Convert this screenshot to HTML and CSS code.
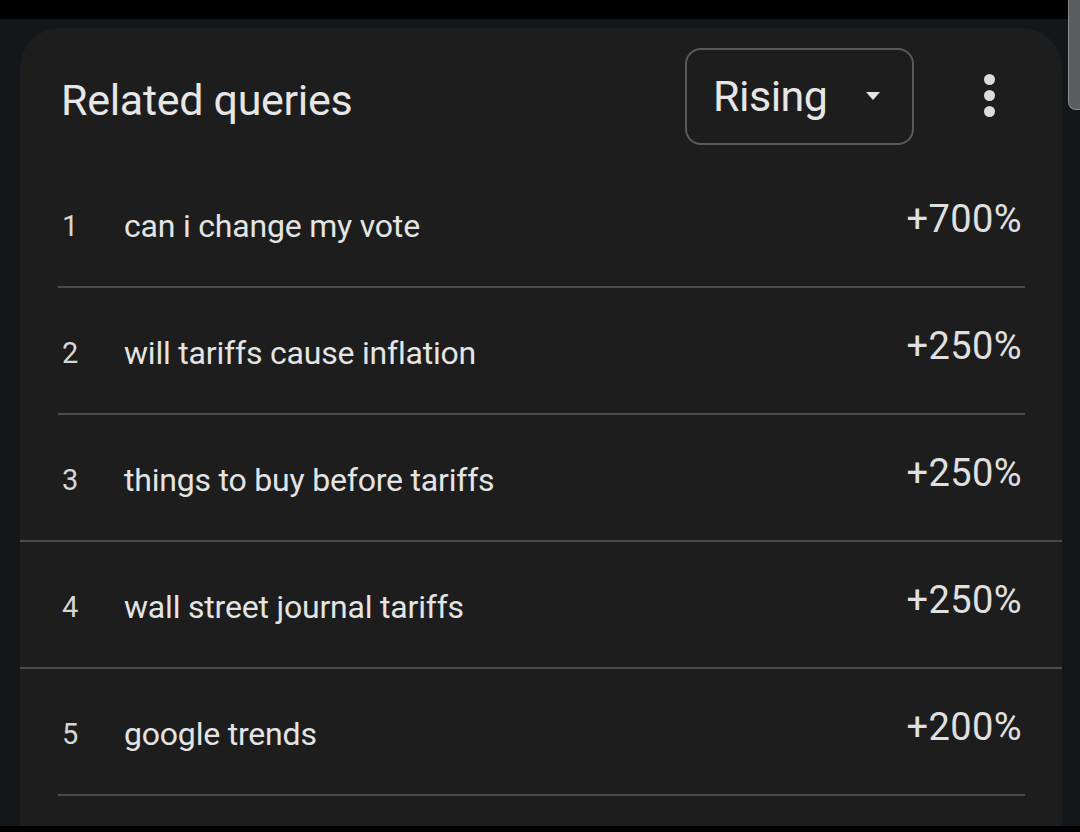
FILE: index.html
```html
<!DOCTYPE html>
<html lang="en">
<head>
<meta charset="utf-8">
<title>Related queries</title>
<link rel="stylesheet" href="styles.css">
</head>
<body>
<div class="topbar"></div>
<div class="scrollthumb"></div>
<div class="page">
  <section class="card">
    <header class="card-head">
      <h2 class="title">Related queries</h2>
      <button class="select" type="button">
        <span class="select-label">Rising</span>
        <svg class="caret" width="14" height="8" viewBox="0 0 14 8"><path d="M0 0h14L7 8z" fill="#e4e4e4"/></svg>
      </button>
      <button class="kebab" type="button" aria-label="More">
        <span class="dot"></span><span class="dot"></span><span class="dot"></span>
      </button>
    </header>
    <ol class="list">
      <li class="row"><span class="num">1</span><span class="query">can i change my vote</span><span class="pct">+700%</span></li>
      <li class="row"><span class="num">2</span><span class="query">will tariffs cause inflation</span><span class="pct">+250%</span></li>
      <li class="row row-wide"><span class="num">3</span><span class="query">things to buy before tariffs</span><span class="pct">+250%</span></li>
      <li class="row row-wide"><span class="num">4</span><span class="query">wall street journal tariffs</span><span class="pct">+250%</span></li>
      <li class="row"><span class="num">5</span><span class="query">google trends</span><span class="pct">+200%</span></li>
    </ol>
  </section>
</div>
<div class="bottombar"></div>
</body>
</html>
```

FILE: styles.css
```css
* { box-sizing: border-box; }

html, body {
  margin: 0;
  padding: 0;
}

body {
  width: 1080px;
  height: 832px;
  overflow: hidden;
  background: #13171a;
  font-family: Roboto, "Noto Sans", sans-serif;
  color: #e4e4e4;
  display: flex;
  flex-direction: column;
  position: relative;
}

.topbar {
  height: 19px;
  background: #000;
  flex: none;
}

.bottombar {
  height: 6px;
  background: #000;
  flex: none;
}

.scrollthumb {
  position: absolute;
  top: 0;
  right: 0;
  width: 12px;
  height: 110px;
  background: #5c5d60;
  border: 1px solid #8a8b8e;
  border-right: none;
  border-top: none;
  border-radius: 0 0 0 8px;
}

.page {
  flex: 1;
  display: flex;
  padding: 9px 18px 0 20px;
  min-height: 0;
}

.card {
  flex: 1;
  background: #1d1d1e;
  border-radius: 40px 40px 0 0;
  display: flex;
  flex-direction: column;
}

.card-head {
  height: 133px;
  display: flex;
  align-items: center;
  padding: 0 53px 0 41px;
  flex: none;
}

.title {
  flex: 1;
  margin: 0;
  font-size: 43px;
  font-weight: 400;
  color: #e6e6e6;
  letter-spacing: -0.3px;
  padding-top: 10px;
}

.select {
  width: 229px;
  height: 97px;
  margin-top: 3px;
  border: 2px solid #5a5a5b;
  border-radius: 16px;
  background: transparent;
  display: flex;
  align-items: center;
  padding: 0 32px 0 26px;
  font-family: inherit;
  color: #e6e6e6;
  cursor: pointer;
}

.select-label {
  flex: 1;
  text-align: left;
  font-size: 43px;
  letter-spacing: -0.5px;
  margin-top: 0;
}

.caret {
  display: block;
}

.kebab {
  width: 40px;
  height: 60px;
  margin-left: 55px;
  margin-top: 2px;
  border: none;
  background: transparent;
  display: flex;
  flex-direction: column;
  align-items: center;
  justify-content: center;
  gap: 5px;
  padding: 0;
}

.dot {
  width: 11px;
  height: 11px;
  border-radius: 50%;
  background: #dcdcdc;
}

.list {
  list-style: none;
  margin: 0;
  padding: 0;
}

.row {
  height: 127px;
  margin: 0 37px 0 38px;
  padding: 0 3px 0 4px;
  border-bottom: 2px solid #4b4b4c;
  display: flex;
  align-items: center;
}

.row-wide {
  margin: 0;
  padding: 0 40px 0 42px;
}

.num {
  width: 62px;
  flex: none;
  font-size: 29px;
  color: #d6d6d6;
  padding-top: 4px;
}

.query {
  flex: 1;
  font-size: 32px;
  color: #e4e4e4;
  letter-spacing: -0.2px;
  padding-top: 4px;
}

.pct {
  font-size: 38px;
  color: #e0e0e0;
  letter-spacing: 0.4px;
  margin-top: -10px;
}
```
